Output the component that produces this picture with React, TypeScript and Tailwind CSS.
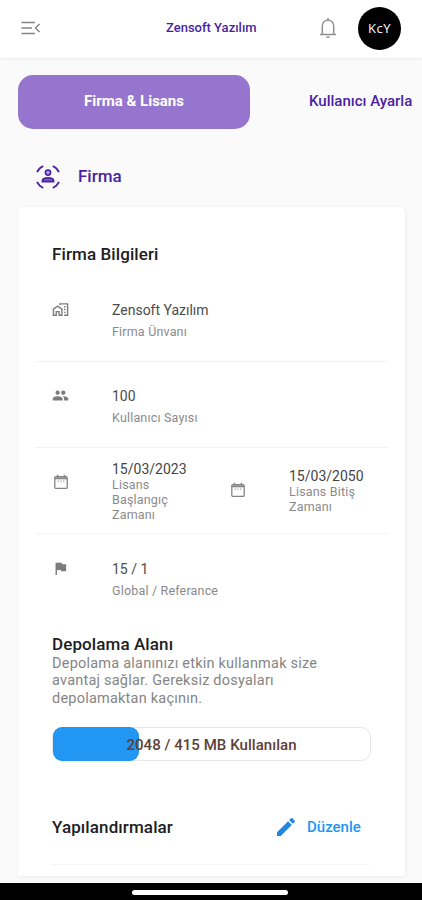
import { ReactNode } from "react";
import {
  MdEdit,
  MdFlag,
  MdOutlineHomeWork,
  MdPeople,
} from "react-icons/md";

const MenuIcon = () => (
  <svg width="20" height="14" viewBox="0 0 20 14" fill="none" stroke="#858585" strokeWidth="1.5">
    <path d="M0.5 1.5h13.5M0.5 7h10.5M0.5 12.5h13.5" />
    <path d="M18.5 3l-4 4 4 4" />
  </svg>
);

const BellIcon = () => (
  <svg width="18" height="22" viewBox="0 0 18 22" fill="none" stroke="#8f8f8f" strokeWidth="1.5">
    <path d="M1 17.4h16M3.3 17.2V9.2c0-3.6 2.3-6 5.7-6s5.7 2.4 5.7 6v8" />
    <path d="M9 3V1M7.6 19.4a1.5 1.5 0 0 0 2.8 0" />
  </svg>
);

const FirmaIcon = () => (
  <svg width="24" height="24" viewBox="0 0 24 24" fill="none" stroke="#4a1fa3" strokeWidth="1.9">
    <path d="M1 7.2Q2.8 3.2 7.2 1M16.8 1Q21.2 3.2 23 7.2M1 16.8Q2.8 20.8 7.2 23M16.8 23Q21.2 20.8 23 16.8" />
    <circle cx="12" cy="7.6" r="2.6" strokeWidth="1.6" fill="#b5a1dd" />
    <path d="M6.4 16.6v-1c0-2 2.8-2.9 5.6-2.9s5.6.9 5.6 2.9v1z" strokeWidth="1.6" fill="#7a58c0" />
  </svg>
);

const CalendarIcon = () => (
  <svg width="14" height="16" viewBox="0 0 14 16" fill="none" stroke="#858585" strokeWidth="1.3">
    <rect x="0.8" y="2.6" width="12.4" height="11.8" rx="1.2" />
    <path d="M1 4.3h12" strokeWidth="2" />
    <path d="M3.6 0.8v2.4M10.4 0.8v2.4" strokeWidth="1.5" />
    <path d="M3.6 7.2h1.4M6.3 7.2h1.4M9 7.2h1.4" stroke="#aaa" />
  </svg>
);

type RowProps = {
  icon: ReactNode;
  title: string;
  label: string;
};

function InfoRow({ icon, title, label }: RowProps) {
  return (
    <div className="flex pl-[17px]">
      <div className="w-[60px] pt-px text-[#7c7c7c]">{icon}</div>
      <div>
        <p className="text-[14px] leading-[20px] text-[#4c4c4c]">{title}</p>
        <p className="pt-[3px] text-[12.5px] leading-[18px] tracking-[0.18px] text-[#8a8a8a]">
          {label}
        </p>
      </div>
    </div>
  );
}

export default function App() {
  return (
    <div className="flex h-[900px] w-[422px] flex-col overflow-hidden bg-[#fafafa] font-['Roboto',sans-serif]">
      {/* App bar */}
      <header className="flex h-[58px] shrink-0 items-center bg-white pb-[2px] shadow-[0_1px_3px_rgba(0,0,0,0.07)]">
        <div className="w-[166px] pl-[21px]">
          <MenuIcon />
        </div>
        <h1 className="w-[153px] whitespace-nowrap text-[13px] font-medium text-[#4a1fa3]">
          Zensoft Yazılım
        </h1>
        <BellIcon />
        <div className="ml-[21px] flex size-[43px] items-center justify-center rounded-full bg-black">
          <span className="whitespace-nowrap pb-px font-['Open_Sans',sans-serif] text-[13px] font-medium leading-[20px] tracking-[0.5px] text-white">
            KcY
          </span>
        </div>
      </header>

      {/* Tabs */}
      <nav className="mt-[17px] flex h-[54px] shrink-0 items-center pl-[18px]">
        <button className="h-[54px] w-[232px] rounded-[15px] bg-[#9575cd] pb-px text-[15px] font-bold text-white">
          Firma &amp; Lisans
        </button>
        <button className="ml-[59px] whitespace-nowrap pb-px text-[15px] font-medium text-[#4a1fa3]">
          Kullanıcı Ayarla
        </button>
      </nav>

      <div className="flex h-[78px] shrink-0 items-center pl-[36px] pt-[17px]">
        <FirmaIcon />
        <h2 className="pl-[18px] text-[17px] font-medium text-[#4a1fa3]">
          Firma
        </h2>
      </div>

      {/* Card */}
      <main className="ml-[18px] h-[669px] w-[387px] shrink-0 rounded-t-[5px] bg-white px-[17px] shadow-[1px_1px_4px_rgba(0,0,0,0.06)]">
        <h3 className="pl-[17px] pt-[35px] text-[17px] font-medium leading-[24px] tracking-[0.1px] text-[#202020]">
          Firma Bilgileri
        </h3>

        <div className="mt-[9px] h-[87px] border-b border-[#f3f3f3] pt-[25px]">
          <InfoRow
            icon={<MdOutlineHomeWork size={17} />}
            title="Zensoft Yazılım"
            label="Firma Ünvanı"
          />
        </div>
        <div className="h-[86px] border-b border-[#f3f3f3] pt-[24px]">
          <InfoRow icon={<MdPeople size={17} />} title="100" label="Kullanıcı Sayısı" />
        </div>
        <div className="flex h-[86px] items-start border-b border-[#f6f6f6] pl-[19px] pt-[13px]">
          <div className="w-[58px] pt-[13px]">
            <CalendarIcon />
          </div>
          <div className="w-[119px]">
            <p className="text-[14px] leading-[16px] text-[#454545]">15/03/2023</p>
            <p className="w-[70px] text-[12.5px] leading-[15px] tracking-[0.18px] text-[#8a8a8a]">
              Lisans Başlangıç Zamanı
            </p>
          </div>
          <div className="w-[58px] pt-[21px]">
            <CalendarIcon />
          </div>
          <div className="pt-[7px]">
            <p className="text-[14px] leading-[16px] text-[#454545]">15/03/2050</p>
            <p className="w-[75px] text-[12.5px] leading-[15px] tracking-[0.18px] text-[#8a8a8a]">
              Lisans Bitiş Zamanı
            </p>
          </div>
        </div>
        <div className="h-[98px] pt-[25px]">
          <InfoRow icon={<MdFlag size={17} />} title="15 / 1" label="Global / Referance" />
        </div>

        {/* Storage */}
        <section className="pl-[17px]">
          <h3 className="text-[17px] font-medium leading-[24px] tracking-[0.1px] text-[#202020]">
            Depolama Alanı
          </h3>
          <p className="-mt-px w-[285px] text-[14.5px] leading-[17.3px] tracking-[0.22px] text-[#858585]">
            Depolama alanınızı etkin kullanmak size avantaj sağlar. Gereksiz
            dosyaları depolamaktan kaçının.
          </p>
          <div className="relative mt-[20px] h-[34px] w-[319px] rounded-[10px] border border-[#e7e7e7]">
            <div className="-mt-px h-[34px] w-[86px] rounded-[9px] bg-[#2196f3]" />
            <span className="absolute inset-0 flex items-center justify-center pt-[2px] text-[15px] font-medium tracking-[0.05px] text-[#5d4037]">
              2048 / 415 MB Kullanılan
            </span>
          </div>
        </section>

        <section className="mt-[54px] flex items-center pl-[17px]">
          <h3 className="w-[222px] text-[17px] font-medium leading-[24px] tracking-[0.1px] text-[#202020]">
            Yapılandırmalar
          </h3>
          <MdEdit size={24} className="text-[#1e88e5]" />
          <button className="pl-[9px] text-[15px] font-medium text-[#2196f3]">
            Düzenle
          </button>
        </section>
        <div className="mx-[17px] mt-[25px] h-px bg-[#f5f5f5]" />
      </main>

      {/* System bar */}
      <footer className="mt-[7px] flex h-[17px] shrink-0 justify-center bg-black pr-[2px] pt-[7px]">
        <div className="h-[5px] w-[156px] rounded-full bg-white" />
      </footer>
    </div>
  );
}
